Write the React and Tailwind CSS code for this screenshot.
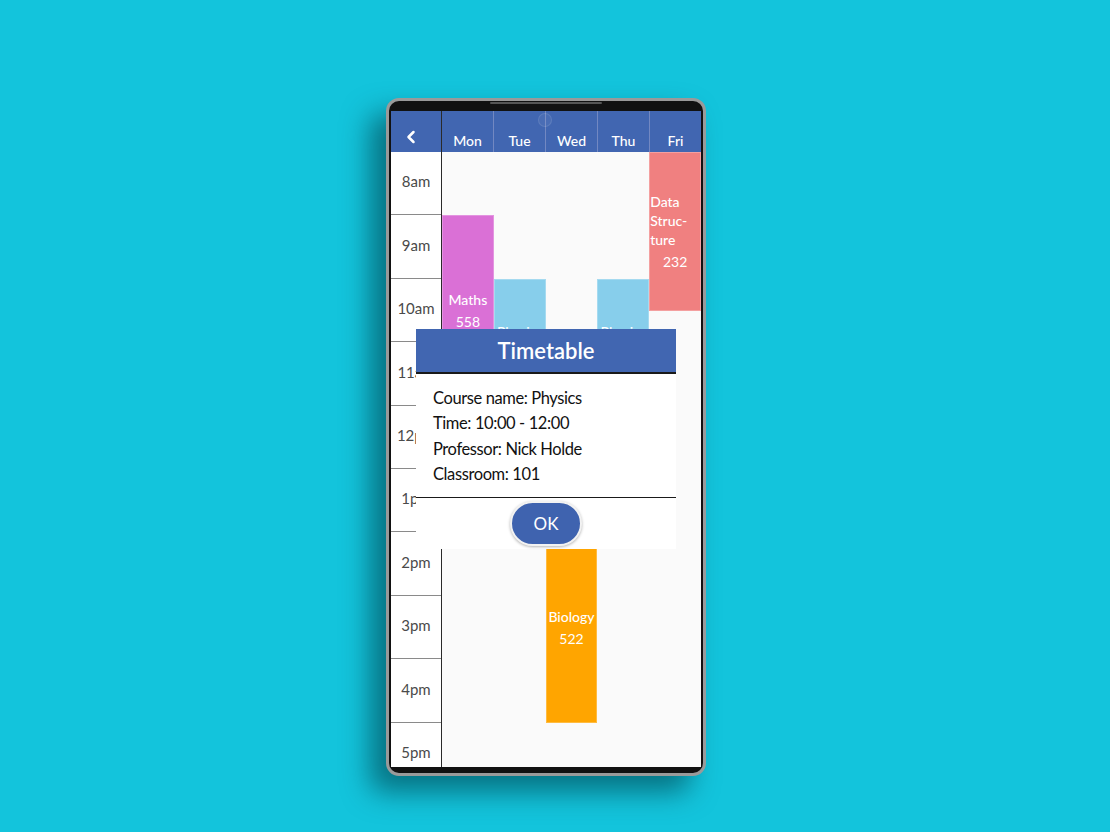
import { ChevronLeft } from 'lucide-react'

const ROW = 63.4
const hours = ['8am', '9am', '10am', '11am', '12pm', '1pm', '2pm', '3pm', '4pm', '5pm']
const days = ['Mon', 'Tue', 'Wed', 'Thu', 'Fri']

// start/end in hours from 8am
const events = [
  { day: 0, start: 1, end: 4, color: 'bg-[#da70d6]', lines: ['Maths'], room: '558' },
  { day: 1, start: 2, end: 4, color: 'bg-[#87ceeb]', lines: ['Physics'], room: '101' },
  { day: 2, start: 6, end: 9, color: 'bg-[#ffa500]', lines: ['Biology'], room: '522' },
  { day: 3, start: 2, end: 4, color: 'bg-[#87ceeb]', lines: ['Physics'], room: '101' },
  { day: 4, start: 0, end: 2.5, color: 'bg-[#f08080]', lines: ['Data', 'Struc-', 'ture'], room: '232', left: true },
]

function EventBlock({ ev }) {
  return (
    <div
      className={`absolute inset-x-0 flex flex-col justify-center border border-white/25 text-[14px] leading-[19px] text-white ${ev.color}`}
      style={{ top: ev.start * ROW, height: (ev.end - ev.start) * ROW }}
    >
      <div className={ev.left ? 'text-left font-medium' : 'text-center font-medium'}>
        {ev.lines.map((l) => (
          <div key={l}>{l}</div>
        ))}
      </div>
      <div className="mt-[3px] text-center">{ev.room}</div>
    </div>
  )
}

export default function App() {
  return (
    <div
      className="h-[832px] w-[1110px] overflow-hidden bg-[#13c4dc] pl-[386px] pt-[98px]"
      style={{ fontFamily: 'Lato, "Noto Sans", sans-serif' }}
    >
      <div className="relative h-[678px] w-[320px] rounded-[13px] border-[3px] border-[#9a9a9a] bg-[#111] px-[2px] pb-[6px] pt-[10px] shadow-[-16px_16px_28px_rgba(0,70,82,0.65)]">
        <div className="absolute left-1/2 top-[1px] h-[2px] w-[112px] -translate-x-1/2 rounded-full bg-[#555]" />
        <div className="relative flex h-full w-full flex-col overflow-hidden bg-white">
          {/* header */}
          <div className="relative flex h-[41px] shrink-0 bg-[#4166b1] text-white">
            <div className="flex w-[51px] items-start justify-center border-r border-[#2a2a2a] pr-[10px] pt-[16px]">
              <ChevronLeft size={20} strokeWidth={3} />
            </div>
            {days.map((d, i) => (
              <div
                key={d}
                className={`flex flex-1 items-end justify-center pb-[1px] text-[14px] font-medium ${i < 4 ? 'border-r border-[#7288c2]' : ''}`}
              >
                {d}
              </div>
            ))}
            <div className="absolute left-[147px] top-[2px] h-[14px] w-[14px] rounded-full border border-white/10 bg-white/5" />
          </div>

          {/* grid */}
          <div className="flex flex-1">
            <div className="w-[51px] shrink-0 border-r border-[#2a2a2a] bg-white">
              {hours.map((h, i) => (
                <div
                  key={h}
                  className={`flex h-[63.4px] items-center justify-center pb-[3px] text-[15px] text-[#4a4a4a] ${i < hours.length - 1 ? 'border-b-[1.5px] border-[#8a8a8a]' : ''}`}
                >
                  {h}
                </div>
              ))}
            </div>
            <div className="flex flex-1 bg-[#fafafa]">
              {days.map((d, i) => (
                <div key={d} className="relative flex-1">
                  {events
                    .filter((e) => e.day === i)
                    .map((ev) => (
                      <EventBlock key={ev.room} ev={ev} />
                    ))}
                </div>
              ))}
            </div>
          </div>

          {/* dialog */}
          <div className="absolute inset-0 flex items-center justify-center">
            <div className="w-[260px] bg-white">
              <div className="flex h-[45px] items-center justify-center border-b-2 border-[#1a1a1a] bg-[#4166b1] text-[22px] font-semibold text-white">
                Timetable
              </div>
              <div className="border-b-[1.5px] border-[#1a1a1a] px-[17px] pb-[10px] pt-[12px] text-[16.5px] leading-[25.4px] tracking-[-0.4px] text-[#111]">
                <div>Course name: Physics</div>
                <div>Time: 10:00 - 12:00</div>
                <div>Professor: Nick Holde</div>
                <div>Classroom: 101</div>
              </div>
              <div className="flex h-[51px] items-center justify-center">
                <button className="flex h-[45px] w-[72px] items-center justify-center rounded-full border-2 border-[#f2f2f2] bg-[#3f63af] text-[17px] text-white shadow-[0_1px_3px_rgba(0,0,0,0.3)]">
                  OK
                </button>
              </div>
            </div>
          </div>
        </div>
      </div>
    </div>
  )
}
